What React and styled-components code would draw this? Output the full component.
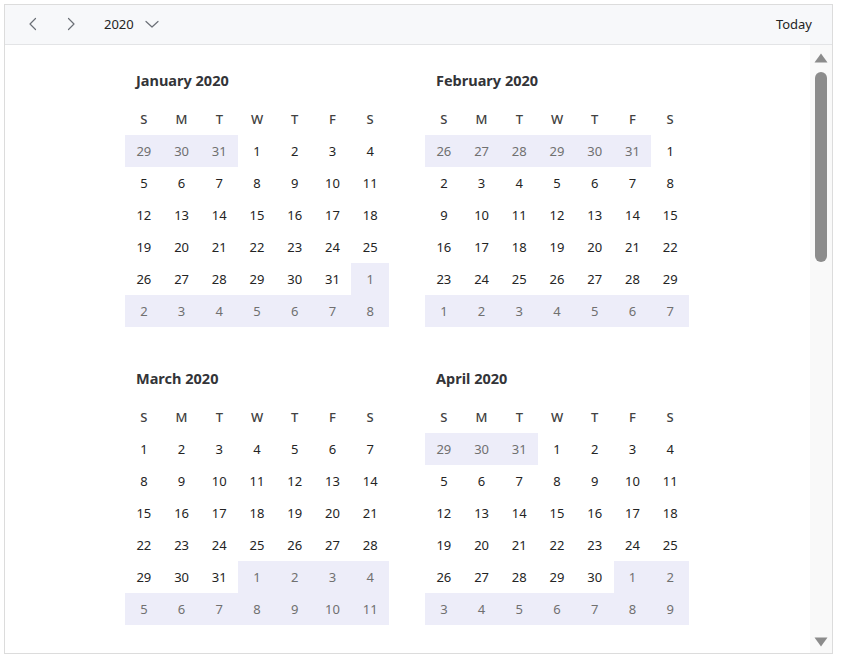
import React from "react";
import styled, { createGlobalStyle } from "styled-components";

const Global = createGlobalStyle`
  html, body { margin: 0; padding: 0; background: #ffffff; }
  body { font-family: "Noto Sans", "Open Sans", sans-serif; }
  * { box-sizing: border-box; }
`;

const Frame = styled.div`
  margin: 4px;
  width: 829px;
  height: 650px;
  border: 1px solid #dcdcdc;
  display: flex;
  flex-direction: column;
  background: #fff;
  overflow: hidden;
`;

const Header = styled.div`
  height: 40px;
  flex: none;
  display: flex;
  align-items: center;
  background: #f7f8fa;
  border-bottom: 1px solid #e3e4e6;
  padding: 0 20px 2px 13px;
`;

const NavButton = styled.button`
  width: 30px;
  height: 30px;
  border: none;
  background: transparent;
  display: flex;
  align-items: center;
  justify-content: center;
  padding: 0;
  margin-right: ${(p) => p.$gap || 0}px;
  color: #6b6f76;
`;

const YearPicker = styled.div`
  display: flex;
  align-items: center;
  gap: 10px;
  margin-left: 18px;
  font-size: 13px;
  color: #242424;
`;

const Spacer = styled.div`
  flex: 1;
`;

const TodayButton = styled.span`
  font-size: 13px;
  color: #242424;
`;

const Body = styled.div`
  flex: 1;
  display: flex;
  min-height: 0;
`;

const Content = styled.div`
  flex: 1;
  overflow: hidden;
  padding: 23px 0 0 120px;
`;

const MonthsGrid = styled.div`
  display: grid;
  grid-template-columns: 264px 264px;
  column-gap: 36px;
  row-gap: 39px;
  justify-content: start;
`;

const Month = styled.div`
  display: flex;
  flex-direction: column;
`;

const MonthTitle = styled.div`
  font-size: 14.5px;
  font-weight: 700;
  color: #333438;
  line-height: 24px;
  padding-left: 11px;
  margin-bottom: 11px;
`;

const DaysGrid = styled.div`
  display: grid;
  grid-template-columns: repeat(7, 1fr);
  grid-auto-rows: 32px;
`;

const WeekDay = styled.div`
  display: flex;
  align-items: center;
  justify-content: center;
  font-size: 13px;
  font-weight: 500;
  color: #424242;
`;

const Day = styled.div`
  display: flex;
  align-items: center;
  justify-content: center;
  font-size: 13px;
  color: ${(p) => (p.$outside ? "#707070" : "#242424")};
  background: ${(p) => (p.$outside ? "#ededf9" : "transparent")};
`;

const ScrollTrack = styled.div`
  width: 22px;
  flex: none;
  background: #f9f9f9;
  display: flex;
  flex-direction: column;
  align-items: center;
  padding-top: 8px;
  padding-bottom: 6px;
`;

const Thumb = styled.div`
  width: 12px;
  height: 190px;
  border-radius: 6px;
  background: #8c8c8c;
  margin-top: 9px;
`;

const TrackSpace = styled.div`
  flex: 1;
`;

const Chevron = ({ dir }) => (
  <svg width="16" height="16" viewBox="0 0 16 16" fill="none">
    {dir === "left" ? (
      <path d="M10.5 2.5 L5 8 L10.5 13.5" stroke="currentColor" strokeWidth="1.2" strokeLinecap="round" strokeLinejoin="round" />
    ) : (
      <path d="M5.5 2.5 L11 8 L5.5 13.5" stroke="currentColor" strokeWidth="1.2" strokeLinecap="round" strokeLinejoin="round" />
    )}
  </svg>
);

const ChevronDown = () => (
  <svg width="16" height="16" viewBox="0 0 16 16" fill="none">
    <path d="M2 5.5 L8 11 L14 5.5" stroke="#6b6f76" strokeWidth="1.2" strokeLinecap="round" strokeLinejoin="round" />
  </svg>
);

const Arrow = ({ up }) => (
  <svg width="14" height="10" viewBox="0 0 14 10">
    {up ? <path d="M7 0.5 L13.5 9.5 L0.5 9.5 Z" fill="#8c8c8c" /> : <path d="M0.5 0.5 L13.5 0.5 L7 9.5 Z" fill="#8c8c8c" />}
  </svg>
);

const MONTHS = [
  "January", "February", "March", "April", "May", "June",
  "July", "August", "September", "October", "November", "December",
];
const WEEK = ["S", "M", "T", "W", "T", "F", "S"];

function buildDays(year, month) {
  const first = new Date(year, month, 1).getDay();
  const days = [];
  for (let i = 0; i < 42; i++) {
    const d = new Date(year, month, 1 - first + i);
    days.push({ n: d.getDate(), outside: d.getMonth() !== month });
  }
  return days;
}

export default function App() {
  const year = 2020;
  return (
    <>
      <Global />
      <Frame>
        <Header>
          <NavButton $gap={8} aria-label="Previous">
            <Chevron dir="left" />
          </NavButton>
          <NavButton $gap={0} aria-label="Next">
            <Chevron dir="right" />
          </NavButton>
          <YearPicker>
            <span>2020</span>
            <ChevronDown />
          </YearPicker>
          <Spacer />
          <TodayButton>Today</TodayButton>
        </Header>
        <Body>
          <Content>
            <MonthsGrid>
              {MONTHS.map((name, m) => (
                <Month key={name}>
                  <MonthTitle>
                    {name} {year}
                  </MonthTitle>
                  <DaysGrid>
                    {WEEK.map((w, i) => (
                      <WeekDay key={"w" + i}>{w}</WeekDay>
                    ))}
                    {buildDays(year, m).map((d, i) => (
                      <Day key={i} $outside={d.outside}>
                        {d.n}
                      </Day>
                    ))}
                  </DaysGrid>
                </Month>
              ))}
            </MonthsGrid>
          </Content>
          <ScrollTrack>
            <Arrow up />
            <Thumb />
            <TrackSpace />
            <Arrow />
          </ScrollTrack>
        </Body>
      </Frame>
    </>
  );
}
